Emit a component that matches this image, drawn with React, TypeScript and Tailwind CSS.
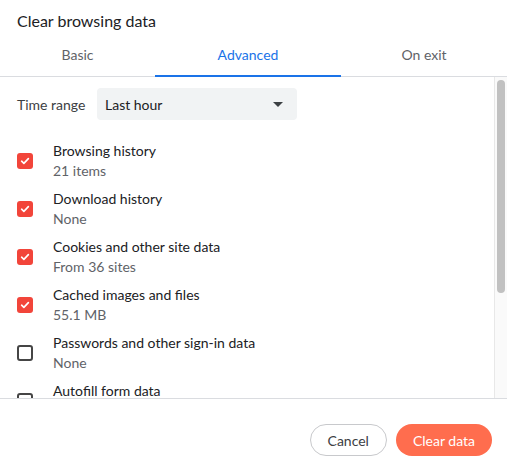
import React from 'react';

const items = [
  { title: 'Browsing history', sub: '21 items', checked: true },
  { title: 'Download history', sub: 'None', checked: true },
  { title: 'Cookies and other site data', sub: 'From 36 sites', checked: true },
  { title: 'Cached images and files', sub: '55.1 MB', checked: true },
  { title: 'Passwords and other sign-in data', sub: 'None', checked: false },
  { title: 'Autofill form data', sub: 'None', checked: false },
];

function Checkbox({ checked }: { checked: boolean }) {
  if (checked) {
    return (
      <div className="w-4 h-4 rounded-[3px] bg-[#f2453a] flex items-center justify-center shrink-0">
        <svg viewBox="0 0 16 16" className="w-3 h-3" fill="none" stroke="white" strokeWidth="2.2" strokeLinecap="round" strokeLinejoin="round">
          <path d="M3.5 8.3l3 2.8 6-6.2" />
        </svg>
      </div>
    );
  }
  return <div className="w-4 h-4 rounded-[3px] border-2 border-[#454545] shrink-0" />;
}

export default function App() {
  return (
    <div className="w-[507px] h-[470px] bg-white flex flex-col text-[#202124]" style={{ fontFamily: 'Lato, "Noto Sans", sans-serif' }}>
      <div className="px-[17px] pt-[9px] h-[38px] text-[16px]">Clear browsing data</div>

      <div className="flex h-[39px] border-b border-[#dadce0] text-[14px]">
        <div className="w-[155px] flex items-center justify-center pb-[6px] text-[#5f6368]">Basic</div>
        <div className="w-[186px] flex items-center justify-center pb-[6px] text-[#1a73e8] relative">
          Advanced
          <div className="absolute left-0 right-0 bottom-[-1px] h-[2px] bg-[#1a73e8]" />
        </div>
        <div className="flex-1 flex items-center justify-center pb-[6px] text-[#5f6368]">On exit</div>
      </div>

      <div className="flex h-[322px] border-b border-[#dadce0] overflow-hidden">
        <div className="flex-1 overflow-hidden">
          <div className="flex items-center pl-[17px] pt-[11px] pb-[17px] text-[14px]">
            <span className="text-[#3c4043] w-[80px]">Time range</span>
            <div className="w-[200px] h-[32px] rounded-[4px] bg-[#f1f3f4] flex items-center justify-between pl-[8px] pr-[14px]">
              <span>Last hour</span>
              <svg viewBox="0 0 10 5" className="w-[10px] h-[5px]"><path d="M0 0h10L5 5z" fill="#3c4043" /></svg>
            </div>
          </div>
          {items.map((it) => (
            <div key={it.title} className="flex items-center h-[48px] pl-[17px]">
              <Checkbox checked={it.checked} />
              <div className="pl-[20px] text-[14px] leading-[20px]">
                <div className="text-[#202124]">{it.title}</div>
                <div className="text-[#5f6368]">{it.sub}</div>
              </div>
            </div>
          ))}
        </div>
        <div className="w-[13px] border-l border-[#e8e8e8] bg-[#fafafa] pt-[3px] flex justify-center">
          <div className="w-[8px] h-[213px] rounded-full bg-[#c1c1c1]" />
        </div>
      </div>

      <div className="flex justify-end items-center gap-[9px] pr-[15px] pt-[25px]">
        <button className="h-[32px] px-[17px] rounded-full border border-[#c8c9cc] text-[14px] text-[#3c4043]">Cancel</button>
        <button className="h-[32px] px-[17px] rounded-full bg-[#ff6d4e] text-white text-[14px]">Clear data</button>
      </div>
    </div>
  );
}
